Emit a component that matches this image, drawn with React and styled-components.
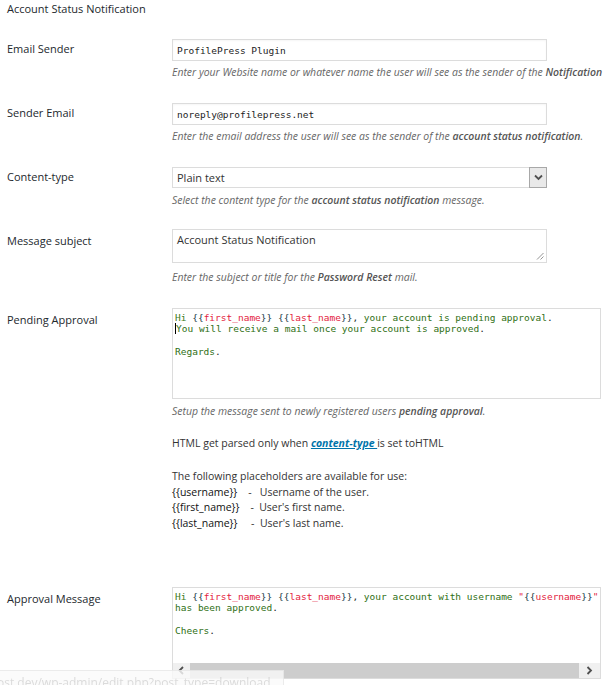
import React from 'react';
import styled, { createGlobalStyle } from 'styled-components';

const GlobalStyle = createGlobalStyle`
  html, body {
    margin: 0;
    padding: 0;
    background: #fff;
  }
  body {
    font-family: 'Open Sans', 'Noto Sans', sans-serif;
    color: #23282d;
  }
`;

const Page = styled.div`
  width: 610px;
  height: 685px;
  overflow: hidden;
  box-sizing: border-box;
  padding-left: 7px;
`;

const Title = styled.h3`
  margin: 0;
  font-size: 11px;
  font-weight: 400;
  line-height: 17px;
  color: #23282d;
`;

const Row = styled.div`
  display: grid;
  grid-template-columns: 165px 1fr;
  padding: ${p => p.$top}px 0 ${p => p.$bottom}px;
`;

const Label = styled.div`
  font-size: 11px;
  line-height: 14px;
  padding-top: ${p => p.$offset || 3}px;
  color: #23282d;
`;

const Field = styled.div`
  display: flex;
  flex-direction: column;
  align-items: flex-start;
  min-width: 0;
`;

const TextInput = styled.input`
  box-sizing: border-box;
  width: 375px;
  height: 22px;
  margin: 0;
  padding: 0 4px;
  border: 1px solid #dcdcdc;
  box-shadow: inset 0 1px 2px rgba(0, 0, 0, 0.04);
  font-family: 'DejaVu Sans Mono', 'Liberation Mono', monospace;
  font-size: 9.5px;
  color: #222;
  background: #fff;
  outline: none;
`;

const Description = styled.p`
  margin: ${p => p.$gap || 4}px 0 0;
  font-size: 10.45px;
  line-height: 14px;
  font-style: italic;
  color: #666;
  white-space: nowrap;

  b {
    font-weight: 600;
    color: #555;
  }
`;

const SelectBox = styled.div`
  box-sizing: border-box;
  width: 375px;
  height: 21px;
  display: flex;
  align-items: stretch;
  border: 1px solid #dcdcdc;
  background: #fff;
`;

const SelectValue = styled.span`
  flex: 1;
  padding-left: 4px;
  font-size: 11px;
  line-height: 19px;
  color: #333;
`;

const ArrowButton = styled.span`
  box-sizing: border-box;
  width: 18px;
  margin: -1px -1px -1px 0;
  display: flex;
  align-items: center;
  justify-content: center;
  background: #e9e9e9;
  border: 1px solid #a8a8a8;
`;

const SubjectArea = styled.div`
  position: relative;
  box-sizing: border-box;
  width: 375px;
  height: 34px;
  padding: 3px 4px;
  border: 1px solid #dcdcdc;
  font-size: 11px;
  line-height: 14px;
  color: #333;
`;

const Grip = styled.svg`
  position: absolute;
  right: 2px;
  bottom: 2px;
`;

const CodeBox = styled.div`
  box-sizing: border-box;
  width: 429px;
  height: ${p => p.$height}px;
  display: flex;
  flex-direction: column;
  border: 1px solid #dcdcdc;
  background: #fff;
  overflow: hidden;
`;

const CodeText = styled.pre`
  flex: 1;
  margin: 0;
  padding: 3px 2px 0;
  font-family: 'DejaVu Sans Mono', 'Liberation Mono', monospace;
  font-size: 9.5px;
  line-height: 11.33px;
  color: #2f6f14;
  white-space: pre;
  overflow: hidden;
`;

const Tok = styled.span`
  color: ${p => p.$c};
`;

const Caret = styled.span`
  display: inline-block;
  width: 0;
  height: 11px;
  border-left: 1px solid #000;
  vertical-align: -2px;
`;

const ScrollBar = styled.div`
  height: 15px;
  display: flex;
  background: #f0f0f0;
`;

const ScrollArrow = styled.span`
  width: ${p => p.$w}px;
  display: flex;
  align-items: center;
  justify-content: center;
`;

const ScrollThumb = styled.span`
  flex: 1;
  background: #cdcdcd;
`;

const Note = styled.p`
  margin: ${p => p.$gap}px 0 0;
  font-size: 10.5px;
  line-height: ${p => p.$lh || 15}px;
  color: #333;
  white-space: pre;
`;

const Link = styled.a`
  color: #0073aa;
  font-weight: 700;
  font-style: italic;
  text-decoration: underline;
`;

const Placeholder = styled.span`
  color: #111;
`;

const StatusBar = styled.div`
  position: fixed;
  left: 0;
  bottom: 0;
  width: 284px;
  height: 15px;
  box-sizing: border-box;
  overflow: hidden;
  background: rgba(250, 250, 250, 0.8);
  border-top: 1px solid rgba(215, 215, 215, 0.45);
  border-right: 1px solid rgba(215, 215, 215, 0.45);
  font-size: 12px;
  line-height: 16px;
  padding-top: 4px;
  color: rgba(170, 170, 170, 0.4);
  white-space: nowrap;
  text-indent: -3px;
`;

const G = '#3b7a16';
const B = '#203a48';
const V = '#e3233e';
const P = '#2a2a2a';

const Chevron = ({ dir }) => {
  const d = dir === 'left' ? 'M5 1 L1.5 4.5 L5 8' : dir === 'right' ? 'M1.5 1 L5 4.5 L1.5 8' : 'M1 1.5 L4.5 5 L8 1.5';
  const size = dir === 'down' ? [9, 7] : [7, 9];
  return (
    <svg width={size[0]} height={size[1]} viewBox={`0 0 ${size[0]} ${size[1]}`}>
      <path d={d} fill="none" stroke="#505050" strokeWidth="1.8" />
    </svg>
  );
};

const Var = ({ name }) => (
  <>
    <Tok $c={B}>{'{{'}</Tok>
    <Tok $c={V}>{name}</Tok>
    <Tok $c={B}>{'}}'}</Tok>
  </>
);

export default function App() {
  return (
    <>
      <GlobalStyle />
      <Page>
        <Title>Account Status Notification</Title>

        <Row $top={22} $bottom={12}>
          <Label>Email Sender</Label>
          <Field>
            <TextInput defaultValue="ProfilePress Plugin" readOnly />
            <Description>
              Enter your Website name or whatever name the user will see as the sender of the <b>Notification</b>
            </Description>
          </Field>
        </Row>

        <Row $top={12} $bottom={12}>
          <Label>Sender Email</Label>
          <Field>
            <TextInput defaultValue="noreply@profilepress.net" readOnly />
            <Description>
              Enter the email address the user will see as the sender of the <b>account status notification</b>.
            </Description>
          </Field>
        </Row>

        <Row $top={12} $bottom={10}>
          <Label>Content-type</Label>
          <Field>
            <SelectBox>
              <SelectValue>Plain text</SelectValue>
              <ArrowButton>
                <Chevron dir="down" />
              </ArrowButton>
            </SelectBox>
            <Description $gap={5}>
              Select the content type for the <b>account status notification</b> message.
            </Description>
          </Field>
        </Row>

        <Row $top={12} $bottom={12}>
          <Label $offset={5}>Message subject</Label>
          <Field>
            <SubjectArea>
              Account Status Notification
              <Grip width="8" height="8" viewBox="0 0 8 8">
                <path d="M7.5 1 L1 7.5 M7.5 4.5 L4.5 7.5" stroke="#888" strokeWidth="0.9" />
              </Grip>
            </SubjectArea>
            <Description $gap={7}>
              Enter the subject or title for the <b>Password Reset</b> mail.
            </Description>
          </Field>
        </Row>

        <Row $top={12} $bottom={44}>
          <Label $offset={5}>Pending Approval</Label>
          <Field>
            <CodeBox $height={91}>
              <CodeText>
                <Tok $c={G}>Hi </Tok><Var name="first_name" /> <Var name="last_name" /><Tok $c={P}>,</Tok> your account is pending approval<Tok $c={P}>.</Tok>
                {'\n'}<Caret />You will receive a mail once your account is approved<Tok $c={P}>.</Tok>
                {'\n\n'}Regards<Tok $c={P}>.</Tok>
              </CodeText>
            </CodeBox>
            <Description $gap={5}>
              Setup the message sent to newly registered users <b>pending approval</b>.
            </Description>
            <Note $gap={18}>
              HTML get parsed only when <Link href="#">content-type </Link>is set toHTML
            </Note>
            <Note $gap={18} $lh={15.5}>
              The following placeholders are available for use:{'\n'}
              <Placeholder>{'{{username}}'}</Placeholder>{'    -   Username of the user.\n'}
              <Placeholder>{'{{first_name}}'}</Placeholder>{'    -  User\'s first name.\n'}
              <Placeholder>{'{{last_name}}'}</Placeholder>{'     -  User\'s last name.'}
            </Note>
          </Field>
        </Row>

        <Row $top={12} $bottom={0}>
          <Label $offset={5}>Approval Message</Label>
          <Field>
            <CodeBox $height={92}>
              <CodeText>
                <Tok $c={G}>Hi </Tok><Var name="first_name" /> <Var name="last_name" /><Tok $c={P}>,</Tok> your account with username <Tok $c={V}>"</Tok><Var name="username" /><Tok $c={V}>"</Tok>
                {'\n'}has been approved<Tok $c={P}>.</Tok>
                {'\n\n'}Cheers<Tok $c={P}>.</Tok>
              </CodeText>
              <ScrollBar>
                <ScrollArrow $w={17}>
                  <Chevron dir="left" />
                </ScrollArrow>
                <ScrollThumb />
                <ScrollArrow $w={21}>
                  <Chevron dir="right" />
                </ScrollArrow>
              </ScrollBar>
            </CodeBox>
          </Field>
        </Row>
      </Page>
      <StatusBar>ost.dev/wp-admin/edit.php?post_type=download</StatusBar>
    </>
  );
}
